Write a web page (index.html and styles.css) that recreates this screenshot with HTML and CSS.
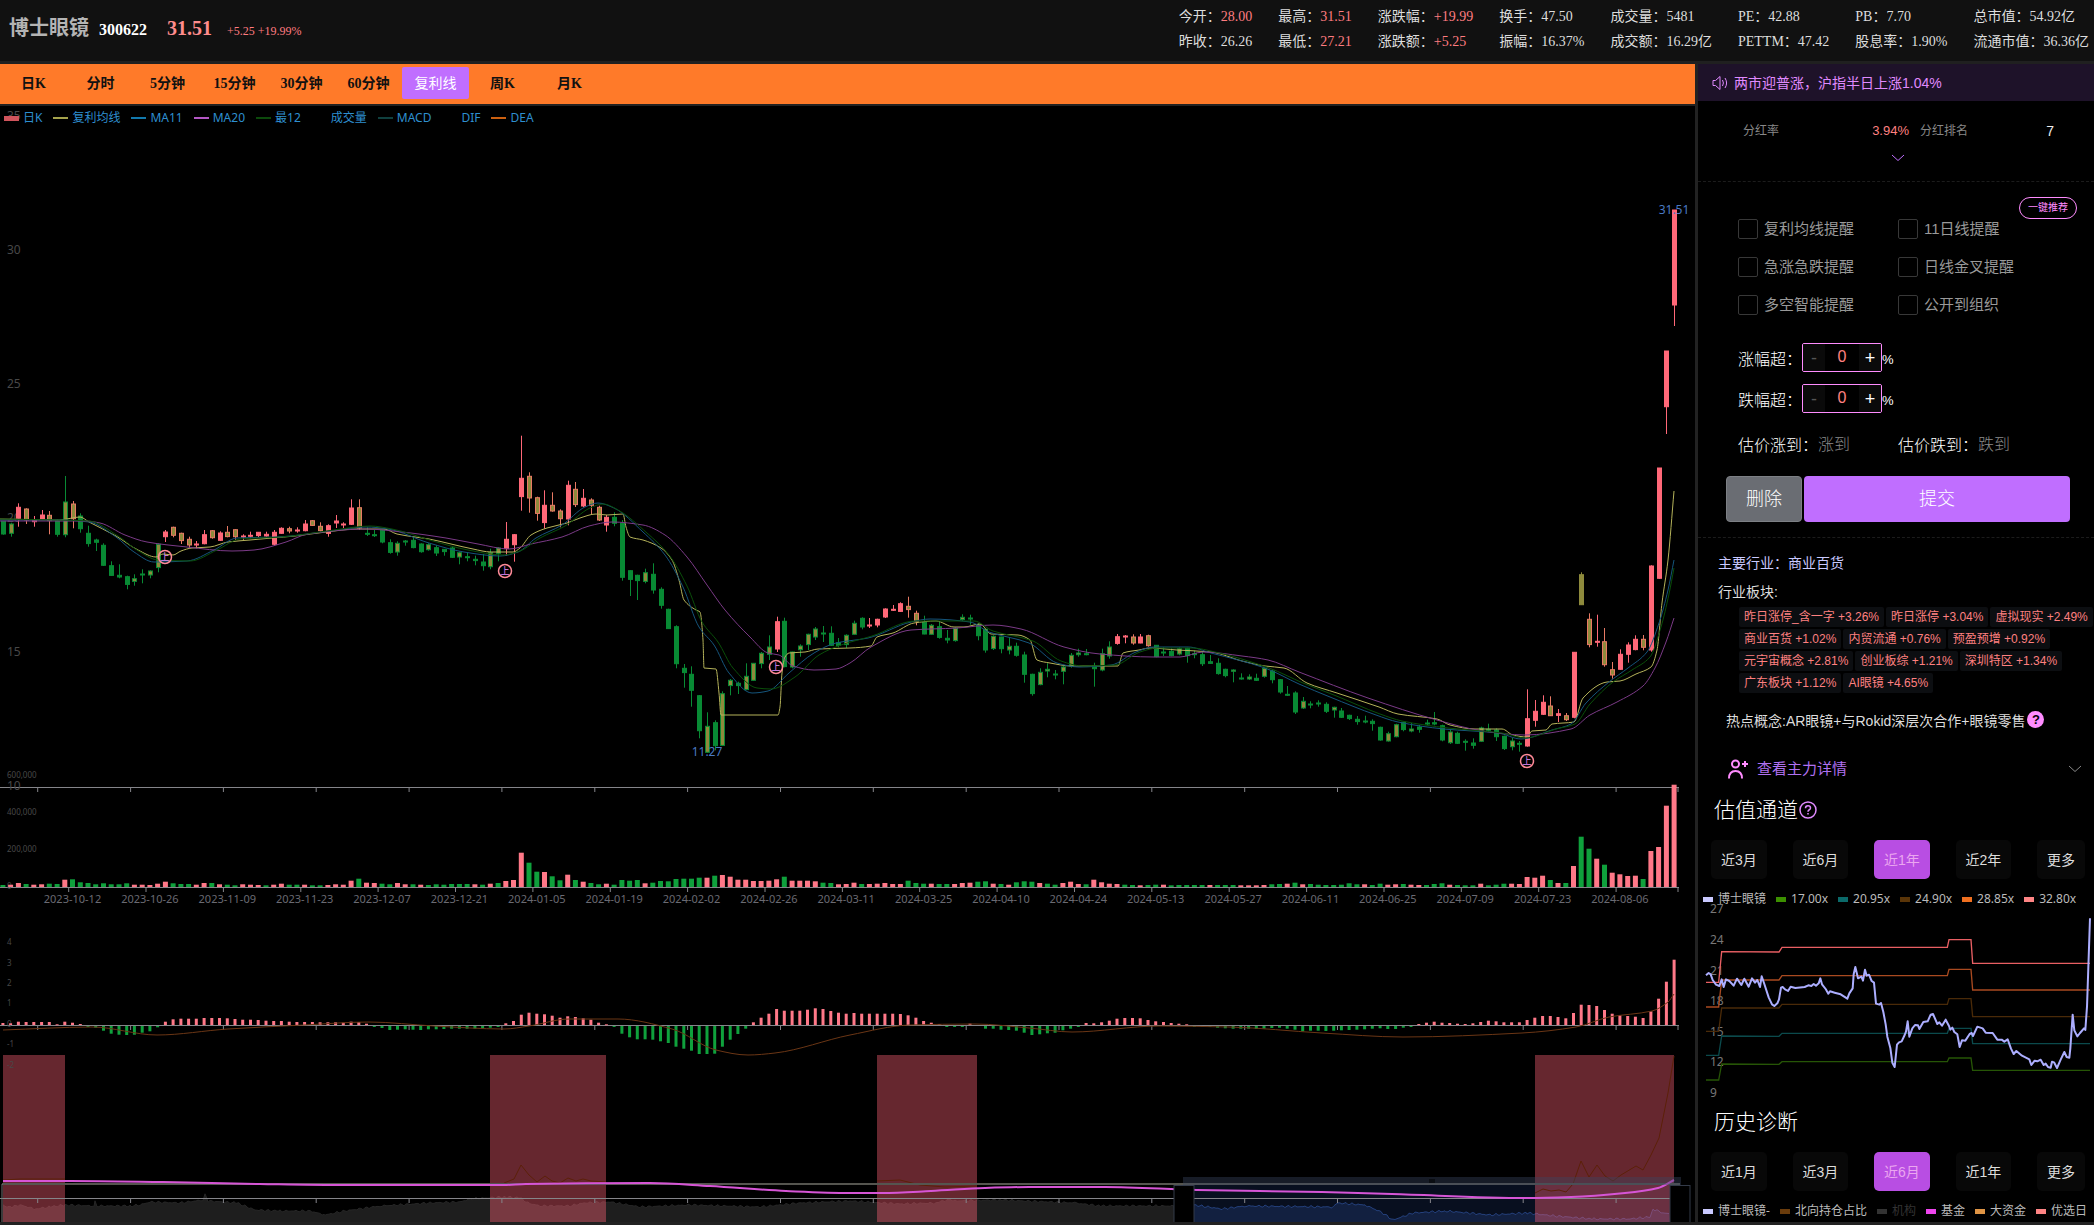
FILE: index.html
```html
<!DOCTYPE html>
<html lang="zh-CN">
<head>
<meta charset="utf-8">
<title>博士眼镜 300622</title>
<meta name="viewport" content="width=device-width, initial-scale=1">
<link rel="stylesheet" href="styles.css">
</head>
<body>
<header class="topbar">
  <div class="stock">
    <h1 class="stock-name">博士眼镜</h1>
    <span class="stock-code">300622</span>
    <span class="stock-price">31.51</span>
    <span class="stock-change">+5.25 +19.99%</span>
  </div>
  <div class="quotes">
    <span>今开：<b class="up">28.00</b></span><span>最高：<b class="up">31.51</b></span><span>涨跌幅：<b class="up">+19.99</b></span><span>换手：47.50</span><span>成交量：5481</span><span>PE：42.88</span><span>PB：7.70</span><span>总市值：54.92亿</span>
    <span>昨收：26.26</span><span>最低：<b class="up">27.21</b></span><span>涨跌额：<b class="up">+5.25</b></span><span>振幅：16.37%</span><span>成交额：16.29亿</span><span>PETTM：47.42</span><span>股息率：1.90%</span><span>流通市值：36.36亿</span>
  </div>
</header>
<main class="layout">
  <section class="board">
    <nav class="tabs">
      <button class="tab">日K</button><button class="tab">分时</button><button class="tab">5分钟</button><button class="tab">15分钟</button><button class="tab">30分钟</button><button class="tab">60分钟</button><button class="tab tab-active">复利线</button><button class="tab">周K</button><button class="tab">月K</button>
    </nav>
    <div class="chart">
      <svg id="kline" class="kline" role="img" aria-label="K线图"></svg>
      <ul class="series">
        <li><i class="swatch sw-k"></i>日K</li>
        <li><i class="swatch sw-yellow"></i>复利均线</li>
        <li><i class="swatch sw-blue"></i>MA11</li>
        <li><i class="swatch sw-violet"></i>MA20</li>
        <li><i class="swatch sw-green"></i>最12</li>
        <li><i class="swatch"></i>成交量</li>
        <li><i class="swatch sw-teal"></i>MACD</li>
        <li><i class="swatch"></i>DIF</li>
        <li><i class="swatch sw-orange"></i>DEA</li>
      </ul>
    </div>
  </section>
  <aside class="side">
    <div class="news">
      <svg width="16" height="16" viewBox="0 0 16 16" fill="none" stroke="currentColor"><path d="M1 5.500h2.500L8 1.500v13l-4.500-4H1z"/><path d="M10.500 5q1.800 3 0 6M13 3q3.200 5 0 10"/></svg>
      <a href="#news">两市迎普涨，沪指半日上涨1.04%</a>
    </div>
    <section class="dividend">
      <div class="dividend-row">
        <span>分红率</span><span class="rate">3.94%</span><span>分红排名</span><span class="rank">7</span>
      </div>
      <button class="expand" aria-label="展开"><svg width="14" height="8" viewBox="0 0 14 8" fill="none" stroke="currentColor"><path d="M1 1l6 5.500L13 1"/></svg></button>
    </section>
    <form class="alerts">
      <button type="button" class="recommend">一键推荐</button>
      <div class="checks">
        <label><input type="checkbox">复利均线提醒</label><label><input type="checkbox">11日线提醒</label>
        <label><input type="checkbox">急涨急跌提醒</label><label><input type="checkbox">日线金叉提醒</label>
        <label><input type="checkbox">多空智能提醒</label><label><input type="checkbox">公开到组织</label>
      </div>
      <div class="limits">
        <div class="limit"><label for="rise">涨幅超：</label><span class="stepper"><button type="button" class="minus">-</button><input id="rise" type="text" value="0"><button type="button">+</button></span><span class="unit">%</span></div>
        <div class="limit"><label for="fall">跌幅超：</label><span class="stepper"><button type="button" class="minus">-</button><input id="fall" type="text" value="0"><button type="button">+</button></span><span class="unit">%</span></div>
      </div>
      <div class="targets">
        <label for="up-to">估价涨到：</label><input id="up-to" type="text" placeholder="涨到">
        <label for="down-to">估价跌到：</label><input id="down-to" type="text" placeholder="跌到">
      </div>
      <div class="actions"><button type="button" class="delete">删除</button><button type="button" class="submit">提交</button></div>
    </form>
    <section class="industry">
      <p class="main-industry">主要行业：<a href="#industry">商业百货</a></p>
      <p>行业板块:</p>
      <div class="tags">
        <span>昨日涨停_含一字 +3.26%</span><span>昨日涨停 +3.04%</span><span>虚拟现实 +2.49%</span><span>商业百货 +1.02%</span><span>内贸流通 +0.76%</span><span>预盈预增 +0.92%</span><span>元宇宙概念 +2.81%</span><span>创业板综 +1.21%</span><span>深圳特区 +1.34%</span><span>广东板块 +1.12%</span><span>AI眼镜 +4.65%</span>
      </div>
      <p class="hot">热点概念:AR眼镜+与Rokid深层次合作+眼镜零售<button class="help" aria-label="说明">?</button></p>
    </section>
    <a class="detail" href="#detail">
      <svg width="22" height="20" viewBox="0 0 22 20" fill="none" stroke="#ff8cff" stroke-width="2"><circle cx="8.500" cy="5" r="3.500"/><path d="M2 19.500c0-5 2.500-7.500 6.500-7.500s6.500 2.500 6.500 7.500M15 5h6M18 2v6"/></svg>
      <span>查看主力详情</span>
      <svg class="detail-arrow" width="14" height="8" viewBox="0 0 14 8" fill="none" stroke="#888"><path d="M1 1l6 5.500L13 1"/></svg>
    </a>
    <section>
      <h2 class="heading">估值通道<svg width="18" height="18" viewBox="0 0 18 18" fill="none" stroke="#e08aff" stroke-width="1.500"><circle cx="9" cy="9" r="8"/><path d="M6.500 7.200q0-2.400 2.500-2.400t2.500 2.200q0 1.300-1.500 2-1 .500-1 1.700M9 12v1.500"/></svg></h2>
      <div class="ranges"><button>近3月</button><button>近6月</button><button class="on">近1年</button><button>近2年</button><button>更多</button></div>
      <ul class="keys">
        <li><i class="key k-price"></i>博士眼镜</li><li><i class="key k-green"></i>17.00x</li><li><i class="key k-teal"></i>20.95x</li><li><i class="key k-brown"></i>24.90x</li><li><i class="key k-orange"></i>28.85x</li><li><i class="key k-pink"></i>32.80x</li>
      </ul>
      <svg class="valuation" viewBox="24 63 1188 618" role="img" aria-label="估值通道">
        <g class="val-axis"><text x="60" y="98">27</text><text x="60" y="191">24</text><text x="60" y="284">21</text><text x="60" y="375">18</text><text x="60" y="467">15</text><text x="60" y="558">12</text><text x="60" y="650">9</text></g>
        <g fill="none" stroke-width="4">
          <polyline stroke="#e85f63" points="48,307 86,307 95,215 267,216 276,202 772,202 777,179 843,179 848,250 1200,250"/>
          <polyline stroke="#a94a20" points="48,381 86,381 95,300 267,300 276,287 772,287 777,268 843,268 848,330 1200,330"/>
          <polyline stroke="#4a2a08" points="48,454 86,454 95,384 267,384 276,373 772,373 777,356 843,356 848,410 1200,410"/>
          <polyline stroke="#0b4a4c" points="48,526 86,526 95,468 267,469 276,460 772,460 777,445 843,445 848,491 1200,491"/>
          <polyline stroke="#265506" points="48,600 86,600 95,552 267,553 276,545 772,545 777,534 843,534 848,571 1200,571"/>
          <polyline stroke="#acaeff" stroke-width="6" stroke-linejoin="round" points="48,286 56,279 62,283 68,300 78,314 88,318 95,298 101,321 108,298 118,303 131,317 141,296 154,315 163,296 176,320 186,295 195,308 202,300 210,321 215,289 222,309 236,352 246,373 253,378 262,370 267,358 273,323 278,321 285,328 294,333 302,320 316,324 344,321 355,316 364,318 371,312 378,317 386,310 391,295 396,313 407,327 415,341 420,334 434,338 452,343 472,356 478,340 488,325 491,283 496,261 504,295 514,290 519,302 525,269 530,287 537,284 545,303 552,308 558,371 568,374 573,369 580,396 587,433 592,470 601,504 607,548 614,561 621,494 627,487 635,484 644,465 648,455 653,424 658,470 667,445 675,435 684,436 688,447 700,426 713,424 722,404 729,402 742,432 748,427 756,437 767,419 777,438 781,449 787,443 793,456 802,463 809,501 816,481 826,482 839,462 845,459 849,468 862,440 878,445 887,458 908,459 922,479 935,479 943,485 953,478 963,506 971,522 979,513 996,527 1018,538 1024,555 1034,542 1042,544 1052,539 1061,555 1067,551 1074,561 1082,563 1086,545 1092,547 1101,564 1112,539 1123,516 1130,531 1138,533 1141,505 1148,404 1153,451 1162,469 1170,459 1182,445 1186,450 1191,380 1200,115"/>
        </g>
      </svg>
    </section>
    <section>
      <h2 class="heading">历史诊断</h2>
      <div class="ranges"><button>近1月</button><button>近3月</button><button class="on">近6月</button><button>近1年</button><button>更多</button></div>
      <ul class="keys">
        <li><i class="key k-price"></i>博士眼镜-</li><li><i class="key k-north"></i>北向持仓占比</li><li class="muted"><i class="key k-muted"></i>机构</li><li><i class="key k-fund"></i>基金</li><li><i class="key k-big"></i>大资金</li><li><i class="key k-pink"></i>优选日</li>
      </ul>
    </section>
  </aside>
</main>
<script src="chart.js"></script>
</body>
</html>
```

FILE: styles.css
```css
* { box-sizing: border-box; }
body {
  margin: 0;
  background: #000;
  color: #ddd;
  font: 14px/20px "Liberation Sans", "Noto Sans CJK SC", sans-serif;
}
h1, h2, p, ul { margin: 0; padding: 0; font-weight: 400; }
ul { list-style: none; }
a { color: inherit; text-decoration: none; }
button, input { font: inherit; color: inherit; border: 0; padding: 0; margin: 0; background: none; }
button { cursor: pointer; }

.topbar {
  display: flex;
  justify-content: space-between;
  height: 64px;
  padding: 5px 5px 0 9px;
  background: #111;
  border-bottom: 3px solid #202020;
  font-family: "Liberation Serif", "Noto Sans CJK SC", serif;
}
.stock { display: flex; align-items: baseline; padding-top: 8px; line-height: 30px; }
.stock-name { font-size: 20px; font-weight: 700; color: #b4b4b4; }
.stock-code { margin-left: 10px; font-size: 16px; font-weight: 700; color: #fff; }
.stock-price { margin-left: 20px; font-size: 20px; font-weight: 700; color: #ff8c8c; }
.stock-change { margin-left: 15px; font-size: 12px; color: #ff7c80; }
.quotes {
  display: grid;
  grid-template-columns: repeat(8, auto);
  column-gap: 26px;
  grid-auto-rows: 25px;
  line-height: 24px;
  white-space: nowrap;
}
.quotes b { font-weight: 400; }
.quotes .up { color: #ff7c80; }

.layout { display: grid; grid-template-columns: minmax(0, 1fr) 396px; border-bottom: 3px solid #222; }
.board { border-right: 3px solid #222; }
.tabs {
  display: flex;
  padding-top: 3px;
  height: 42px;
  background: #ff7a29;
  border-bottom: 2px solid #222;
  font-family: "Liberation Serif", "Noto Sans CJK SC", serif;
}
.tab { width: 67px; height: 32px; padding-top: 2px; color: #111; font-weight: 700; }
.tab-active { background: #c06eff; color: #fff; font-weight: 400; border-radius: 2px; }

.chart { position: relative; }
.kline { display: block; width: 100%; height: 1116px; font-family: "Noto Sans", sans-serif; }
.series {
  position: absolute;
  top: 2px;
  left: 4px;
  display: flex;
  gap: 11px;
  color: #2e8fd0;
  font: 12px/20px "Noto Sans", "Noto Sans CJK SC", sans-serif;
}
.series li { display: flex; align-items: center; gap: 4px; }
.swatch { width: 15px; height: 2px; }
.sw-k { height: 5px; background: #d0545c; }
.sw-yellow { background: #a5a34c; }
.sw-blue { background: #1279ad; }
.sw-violet { background: #b357c4; }
.sw-green { background: #0c4a0c; }
.sw-teal { background: #10403f; }
.sw-orange { background: #cc6010; }
.label { fill: #484848; font-size: 12px; }
.label-date { fill: #6a6a72; font-size: 11px; text-anchor: middle; }
.label-small { fill: #484848; font-size: 8px; }
.label-extreme { fill: #4a7ac4; font-size: 12px; text-anchor: middle; font-family: "Noto Sans", sans-serif; }
.mark { fill: #e58cff; font-size: 9px; text-anchor: middle; font-family: "Noto Sans CJK SC", sans-serif; }

.side { overflow: hidden; min-width: 0; }
.news { display: flex; align-items: center; gap: 6px; height: 37px; padding: 1px 0 0 14px; background: #1e1229; color: #e08aff; }
.dividend { padding: 21px 24px 0 45px; height: 81px; border-bottom: 1px dashed #1c1c1c; }
.dividend-row { display: flex; font-size: 12px; line-height: 18px; color: #888; }
.rate { width: 130px; margin-right: 11px; text-align: right; font-size: 13px; color: #ff8080; }
.rank { margin-left: auto; margin-right: 16px; font-size: 14px; color: #eee; }
.expand { display: block; width: 14px; height: 8px; margin: 14px 0 0 148px; color: #c06eff; }
.expand svg { display: block; }

.alerts { padding: 15px 24px 15px 28px; border-bottom: 1px dashed #1c1c1c; }
.recommend {
  display: block;
  width: 58px;
  height: 22px;
  margin: 0 -7px 0 auto;
  border: 1px solid #ff8cff;
  border-radius: 11px;
  color: #ff8cff;
  font-size: 10px;
  line-height: 18px;
}
.checks { display: grid; grid-template-columns: 160px 160px; row-gap: 18px; padding-left: 12px; color: #999; font-size: 15px; }
.checks label { display: flex; align-items: center; gap: 6px; height: 20px; line-height: 22px; }
.checks input { appearance: none; width: 20px; height: 20px; border: 1px solid #383838; border-radius: 2px; }
.limits { display: grid; row-gap: 12px; margin-top: 28px; padding-left: 12px; font-size: 16px; font-weight: 300; color: #fff; }
.limit { display: flex; align-items: center; height: 29px; }
.limit label { width: 64px; padding-top: 4px; }
.stepper { display: flex; width: 80px; height: 29px; border: 1px solid #ff8cff; border-radius: 2px; overflow: hidden; }
.stepper button { width: 22px; background: #0a0a0a; color: #fff; font-size: 18px; }
.stepper .minus { color: #555; }
.stepper input { flex: 1; min-width: 0; padding-bottom: 2px; text-align: center; color: #ff8080; }
.unit { padding-top: 4px; font-size: 13px; }
.targets { display: grid; grid-template-columns: 80px 80px 80px 80px; align-items: center; height: 22px; margin-top: 21px; padding-left: 12px; font-size: 16px; font-weight: 300; color: #fff; white-space: nowrap; }
.targets label { padding-top: 2px; }
.targets input { width: 100%; height: 22px; }
.targets input::placeholder { color: #8a8a8a; opacity: 1; }
.actions { display: flex; gap: 2px; height: 46px; margin-top: 20px; font-size: 18px; font-weight: 300; }
.actions button { border-radius: 4px; color: #fff; }
.actions .delete { width: 76px; background: #6a6d73; border: 1px solid #7d8085; }
.actions .submit { flex: 1; background: #c06eff; }

.industry { padding: 15px 0 0 20px; }
.industry p + p { margin-top: 9px; }
.main-industry { color: #c9c9ff; }
.tags { display: flex; flex-wrap: wrap; gap: 2px; margin: 5px 0 18px; padding-left: 21px; }
.tags span { padding: 0 5px; border-radius: 2px; background: #0c0e11; color: #ff8080; font-size: 12px; white-space: nowrap; }
.hot { display: flex; gap: 2px; padding-left: 8px; white-space: nowrap; }
.help { width: 17px; height: 17px; border-radius: 50%; background: #ff8cff; color: #000; font-size: 13px; font-weight: 700; line-height: 17px; }
.detail { display: flex; align-items: center; gap: 8px; height: 20px; margin: 28px 12px 16px 29px; color: #b070f0; font-size: 15px; }
.detail-arrow { margin-left: auto; }
.heading { display: flex; align-items: center; gap: 1px; padding-left: 16px; font-size: 21px; font-weight: 300; line-height: 30px; color: #fff; }
.ranges { display: flex; justify-content: space-between; margin: 15px 9px 10px 13px; }
.ranges button { height: 39px; padding: 0 10px; border-radius: 5px; background: #080808; }
.ranges .on { background: #b84ee3; color: #eba6f0; }
.keys { display: flex; gap: 10px; padding-left: 5px; font: 12px/20px "Noto Sans", "Noto Sans CJK SC", sans-serif; color: #bbb; white-space: nowrap; }
.keys li { display: flex; align-items: center; gap: 5px; }
.key { width: 10px; height: 5px; }
.k-price { background: #c9c9ff; }
.k-green { background: #3c9000; }
.k-teal { background: #0b6a6a; }
.k-brown { background: #5a3508; }
.k-orange { background: #f07020; }
.k-pink { background: #ff8585; }
.k-north { background: #6a3c0c; }
.k-fund { background: #ee45ee; }
.k-big { background: #e09545; }
.k-muted { background: #333; }
.muted { color: #333; }
.valuation { display: block; width: 100%; margin-top: -8px; }
.val-axis { fill: #777; font: 36px "Noto Sans", sans-serif; }
```

FILE: chart.js
```js
// Candle rows: kind, high, body top, body bottom, low.
// R rising, G falling, r/g hollow variants, y neutral. Levels are thirds of a pixel below each block's base.
var BLOCKS = [
  { base: 440, rows: 'G244,244,282,284 g248,252,280,290 R190,202,235,260 r205,207,240,252 R228,240,245,260 R210,225,238,240 r213,226,242,283 G238,243,283,290 g108,186,284,292 r183,192,236,265 G220,228,266,278 G257,280,311,320 G296,300,307,333 G310,316,376,378 G364,377,406,408 G373,406,411,415 G407,410,433,448 g403,416,424,437 G388,402,405,430 g391,393,405,415 g310,313,383,397 R270,276,290,306 r260,262,286,292 r278,280,302,312 r290,298,315,325 R303,312,315,325 R270,284,311,313 r270,272,293,296 R274,279,301,303 r258,277,290,292 r268,269,290,300 R283,288,290,300 R275,286,288,295 R277,277,287,292 R275,283,288,290 R270,277,313,317 R262,265,280,281 r260,266,273,280 R262,270,272,278 R240,252,272,274 r240,242,256,258 r247,259,272,275 R253,257,280,290 R225,243,249,264 R247,252,254,264 R178,204,253,255 r178,203,264,270 G262,280,281,288 G270,284,287,291 G270,271,306,310 G298,308,337,341 g304,310,336,347 G300,303,305,317 G290,301,323,325 G310,312,335,338 g310,314,329,332 G316,323,339,348 G328,328,335,347 G318,324,352,354 g335,338,351,373 G338,350,353,364 G347,358,362,376 G342,366,377,392 g326,338,380,388 g322,324,340,364 R246,298,326,347 R282,284,314,365 R-13,115,170,212 r97,109,174,218 r170,173,220,242 R151,196,248,266 r157,196,213,215 r208,213,236,262 R122,136,237,256 r126,148,194,201 R147,175,198,202 r175,180,196,225 r197,202,240,243 R225,232,255,275 G217,232,250,259 G240,250,412,422 G391,392,418,468 G404,406,422,480 g386,398,424,430 G370,403,450,461 G442,448,496,506 G506,508,566,567 G556,560,671,685 G672,685,698,743 G679,703,751,800 G765,767,872,895' },
  { base: 560, rows: 'g457,499,577,578 G481,488,557,571 g394,401,556,558 g357,361,377,406 G365,370,377,402 g310,349,389,391 g309,310,361,362 g276,280,311,325 g226,261,283,300 R170,185,267,276 G173,184,320,322 g275,276,321,325 g253,258,269,290 g221,223,254,270 g201,207,231,240 G198,219,221,246 G199,220,256,258 G234,248,256,262 g223,226,254,264 g182,190,223,224 G172,175,201,208 R174,195,197,204 R176,178,195,202 R145,147,171,174 R135,148,151,153 R127,131,154,156 r110,139,149,173 r152,160,184,196 G167,187,222,223 g192,196,223,224 G184,200,232,236 G210,235,240,250 g202,205,242,245 g163,172,179,183 G164,174,177,194 G190,195,227,241 G206,208,270,278 g226,229,266,270 G230,231,266,280 g233,259,270,283 G248,259,286,290 G275,285,343,368 G341,343,401,407 g325,337,374,376 g310,328,333,352 G330,342,345,358 g318,321,334,373 g279,286,318,323 g266,279,284,290 G267,281,283,286 G308,318,326,380 g266,281,330,334 g244,261,288,296 R222,230,250,254 R225,228,231,250 r223,231,249,254 R222,231,249,250 r224,227,257,260 G256,256,290,292 G262,276,279,288 G265,274,287,289 g262,266,282,286 G263,265,287,308 G272,281,284,295 G273,284,311,318 G285,305,310,311 G295,310,341,344 G326,328,347,352 g328,330,334,367 G340,354,356,359 g343,351,357,360 G341,355,361,363 g323,325,349,353 G330,333,359,370 G357,359,396,401 G378,403,406,408 G394,399,456,462 g411,424,444,447 G424,432,435,445 G421,429,431,440 G427,433,454,459 g440,442,450,473 G444,453,472,474 G464,466,476,480 G468,478,485,494 G467,483,486,490 G478,484,491,512 G500,502,540,542 g515,521,543,545 g491,494,530,532 G485,487,509,514 g489,507,513,517 G495,501,508,518 G479,489,491,496 G456,488,492,496 G494,497,540,544 g510,516,548,552 G515,520,550,552 G538,544,546,572 G535,549,556,566 g500,504,544,546 G491,508,510,514 G505,510,530,543 G527,529,566,570 g533,543,560,571 G543,550,553,575 R388,476,558,560 R420,454,481,500 R406,427,463,465 r409,438,467,468 R447,461,466,486 r459,467,479,483 R276,277,472,475 y37,44,134,134 r160,178,254,262 R164,244,247,260 r204,245,314,320 r306,329,345,356 R268,283,328,329 R247,255,283,308 R226,238,269,271 r225,238,262,271 R16,18,270,275 R-276,-276,55,56 R-627,-627,-460,-378 R-1050,-1050,-765,-702' }
];
var VOLUME = 'g6 r7 r12 g9 r7 r8 g10 g9 r22 g23 g14 g12 g8 g11 g8 g8 g11 r7 r7 r6 r10 r16 g11 g9 g9 r7 r12 g12 r8 g7 g5 r8 r7 r6 g5 r7 r10 g7 g7 r7 g5 g5 r6 r8 r7 r19 g25 r13 r12 g10 g8 r12 r8 g8 r7 g6 g8 g7 g9 g9 g9 r8 g7 r10 g12 r18 r21 r103 g73 g46 r45 g32 g20 r37 g21 r16 g12 g8 r10 g7 g21 g19 g21 r11 g13 g18 g17 g24 g25 g25 g28 r28 g34 r36 r31 r22 r22 r18 r18 r19 r23 g31 r19 r19 r19 r17 g13 g12 r8 r9 r13 g9 r9 r10 r12 r9 r9 g19 g12 g10 r10 g9 g9 r9 r12 r13 g16 g17 r10 g9 r7 g14 g17 g16 r12 g10 g7 r12 r16 r9 g8 r22 r14 r10 r9 g7 g6 r5 g6 g7 r7 g5 g6 g6 g6 g6 r6 g6 g6 g6 r5 r5 r5 r6 g8 g9 r10 g13 r8 g9 g7 g6 g6 g7 g11 g8 r8 g6 g10 r7 r8 g9 r7 r6 g6 g9 g11 r7 g6 g5 g5 r10 g5 g7 g10 r10 r9 r30 r28 r34 g21 r12 g12 r63 g151 g115 r85 g67 r43 r38 r33 r34 g24 r108 r120 r244 r307'.split(' ');
var MACD = [6,5,10,9,9,9,9,2,10,7,3,-2,-5,-14,-23,-26,-27,-26,-20,-16,-4,10,17,19,19,19,21,21,21,20,18,16,16,15,13,12,12,10,9,9,9,8,8,8,7,10,9,4,-2,-6,-12,-11,-10,-11,-12,-10,-10,-9,-8,-8,-8,-8,-7,-5,-2,5,12,31,37,34,32,28,22,26,24,20,16,7,2,-3,-23,-34,-40,-40,-41,-46,-51,-62,-68,-74,-84,-84,-83,-62,-41,-24,-8,8,22,34,48,43,43,43,46,50,48,42,37,34,36,34,34,34,34,34,33,29,22,12,7,3,-1,-3,-2,4,0,-8,-8,-11,-12,-14,-20,-27,-25,-22,-20,-13,-8,-1,6,5,8,13,19,21,21,20,15,11,9,6,4,2,-1,-2,-3,-5,-7,-8,-8,-8,-9,-8,-6,-5,-8,-11,-16,-14,-14,-15,-14,-13,-12,-11,-10,-8,-7,-9,-9,-5,-2,3,7,10,7,6,4,3,5,9,13,11,8,8,8,15,22,27,27,24,20,36,61,60,57,45,34,29,27,25,21,41,79,130,196];

var COMPOUND = '0,519 60,520 72,518 80,517 89,522 116,536 138,550 156,557 163,554 173,555 181,551 192,548 210,547 228,542 250,540 272,538 295,536 326,532 357,529 384,529 397,534 415,537 429,539 451,544 473,549 491,552 513,552 520,548 531,535 547,528 567,523 580,518 596,514 607,515 623,514 626,527 630,537 643,540 661,548 672,560 679,580 684,600 696,610 700,612 703,640 704,668 716,669 719,693 721,715 778,715 780,707 782,673 785,657 789,653 805,652 818,649 850,648 871,646 877,637 893,633 914,623 936,621 954,627 964,627 980,624 991,634 1018,635 1030,640 1037,660 1050,663 1071,666 1118,666 1123,653 1139,650 1150,648 1177,650 1211,652 1242,661 1265,666 1284,668 1307,683 1337,693 1379,707 1398,714 1437,719 1450,725 1475,729 1502,729 1513,735 1527,737 1532,731 1546,730 1552,724 1574,722 1583,698 1607,682 1620,681 1636,674 1651,667 1657,650 1662,603 1668,560 1674,491';
var MA11 = '0,520 60,520 89,522 116,537 134,552 154,562 187,561 214,550 237,538 277,537 330,531 366,527 388,529 429,543 464,552 500,556 518,552 536,538 562,525 585,507 598,503 614,508 643,532 665,555 683,587 699,627 714,645 729,673 752,693 768,691 789,673 814,653 836,643 868,638 911,622 930,619 970,622 989,632 1029,643 1057,663 1079,667 1111,665 1136,652 1154,647 1188,647 1211,653 1265,668 1299,684 1330,697 1376,715 1398,722 1444,729 1498,733 1521,739 1552,730 1571,724 1586,703 1609,682 1628,668 1647,652 1659,623 1668,590 1674,560';
var BEST12 = '0,519 60,520 89,521 118,536 137,550 158,560 190,561 217,550 240,539 281,537 334,530 370,526 392,529 433,541 468,550 503,555 520,551 540,538 565,526 590,508 603,504 618,510 647,533 669,555 687,586 702,622 718,642 733,668 757,688 771,689 795,677 819,655 841,645 872,636 915,621 935,621 974,621 993,631 1033,641 1061,661 1083,666 1115,665 1140,652 1158,648 1192,648 1215,652 1269,668 1303,683 1334,695 1380,714 1402,721 1448,728 1502,733 1525,738 1556,729 1575,724 1590,704 1613,682 1632,670 1650,657 1661,627 1669,594 1674,568';
var MA20 = '0,521 85,521 100,523 125,535 147,542 187,547 232,551 254,550 286,542 308,534 366,529 402,532 446,538 478,544 509,549 531,544 562,537 589,526 612,522 643,525 665,535 687,557 707,585 725,610 750,637 768,653 779,655 793,666 814,670 836,669 850,663 871,647 911,630 957,628 993,625 1021,629 1064,647 1100,654 1154,657 1180,657 1203,652 1242,656 1268,660 1299,672 1368,698 1437,720 1483,731 1525,735 1571,729 1590,715 1617,702 1643,686 1655,668 1666,642 1674,618';
var DEA = '3,1030 92,1027 157,1035 228,1029 304,1025 369,1022 434,1026 504,1029 529,1026 569,1019 618,1019 672,1029 716,1050 748,1055 775,1053 850,1035 910,1025 975,1024 1029,1028 1072,1032 1159,1026 1229,1027 1322,1033 1403,1037 1522,1033 1576,1027 1609,1017 1652,1011 1668,1002 1674,994';
var TREND = '3,1181 70,1181 163,1182 260,1184 336,1185 504,1185 526,1184 650,1183 710,1186 786,1191 850,1193 882,1193 931,1191 985,1188 1029,1187 1105,1187 1197,1190 1322,1192 1392,1194 1528,1198 1571,1197 1625,1193 1658,1188 1674,1180';
var HISTORY = '3,1206 12,1207 20,1205 35,1209 50,1207 65,1205 94,1206 95,1202 97,1206 130,1206 140,1205 150,1202 180,1203 203,1200 205,1194 208,1201 237,1203 255,1210 280,1211 310,1211 325,1215 345,1211 380,1206 430,1203 460,1202 470,1199 505,1197 520,1198 528,1203 540,1206 570,1206 584,1203 610,1202 640,1207 690,1205 760,1207 800,1203 850,1201 900,1204 935,1203 951,1199 953,1201 1000,1200 1075,1203 1100,1206 1184,1206';
var WINDOW = '1194,1205 1222,1209 1245,1206 1332,1207 1338,1203 1365,1205 1381,1212 1393,1220 1413,1213 1446,1211 1490,1215 1527,1213 1555,1216 1592,1219 1630,1219 1650,1217 1653,1209 1663,1213 1671,1214';
var SPIKES = [
  '3,1180 20,1179 40,1179 65,1179',
  '504,1183 514,1179 521,1165 529,1175 537,1182 545,1176 552,1181 560,1183 568,1178 576,1181 583,1179 591,1181 606,1182',
  '877,1181 900,1180 920,1185 945,1187 977,1186',
  '1535,1193 1543,1189 1551,1191 1559,1190 1566,1192 1573,1184 1581,1161 1589,1177 1597,1165 1605,1176 1613,1181 1621,1175 1636,1166 1643,1170 1651,1155 1659,1138 1668,1093 1674,1056'
];
var ZONES = [[3, 65], [490, 606], [877, 977], [1535, 1674]];
var DATES = ['2023-10-12','2023-10-26','2023-11-09','2023-11-23','2023-12-07','2023-12-21','2024-01-05','2024-01-19','2024-02-02','2024-02-26','2024-03-11','2024-03-25','2024-04-10','2024-04-24','2024-05-13','2024-05-27','2024-06-11','2024-06-25','2024-07-09','2024-07-23','2024-08-06'];

var TOP = 106, HEIGHT = 1116, BASE_WIDTH = 1695, COUNT = 217;
var RED = '#ff6878', GREEN = '#088a34', OLIVE = '#8e8a3c';

function points(text) {
  return text.split(' ').map(function (p) { return p.split(',').map(Number); });
}

function draw() {
  var svg = document.getElementById('kline');
  var width = svg.clientWidth, k = width / BASE_WIDTH, out = [];
  svg.setAttribute('viewBox', '0 ' + TOP + ' ' + width + ' ' + HEIGHT);
  function X(i) { return (2.9 + 7.737 * i) * k; }
  function rect(x, y, w, h, fill, extra) {
    out.push('<rect x="' + x.toFixed(1) + '" y="' + y.toFixed(1) + '" width="' + w.toFixed(1) + '" height="' + Math.max(h, 1).toFixed(1) + '" fill="' + fill + '" ' + (extra || '') + '/>');
  }
  function line(x1, y1, x2, y2, stroke, w) {
    out.push('<path d="M' + x1.toFixed(1) + ' ' + y1.toFixed(1) + 'L' + x2.toFixed(1) + ' ' + y2.toFixed(1) + '" stroke="' + stroke + '" stroke-width="' + (w || 1) + '"/>');
  }
  function text(x, y, cls, value) {
    out.push('<text x="' + x.toFixed(1) + '" y="' + y + '" class="' + cls + '">' + value + '</text>');
  }
  // Curve through the points with horizontal-distance control handles limited by the neighbours' slope.
  function curve(data, stroke, w) {
    var p = points(data), d = 'M' + p[0][0] * k + ' ' + p[0][1], i;
    function slope(n) {
      if (n === 0 || n === p.length - 1) return null;
      var a = (p[n][1] - p[n - 1][1]) / (p[n][0] - p[n - 1][0]);
      var b = (p[n + 1][1] - p[n][1]) / (p[n + 1][0] - p[n][0]);
      return a * b <= 0 ? 0 : 2 * a * b / (a + b);
    }
    for (i = 1; i < p.length; i++) {
      var a = p[i - 1], b = p[i], h = (b[0] - a[0]) / 3, s = (b[1] - a[1]) / (b[0] - a[0]);
      var m = slope(i - 1), n = slope(i);
      if (m === null) m = s;
      if (n === null) n = s;
      d += 'C' + [(a[0] + h) * k, a[1] + m * h, (b[0] - h) * k, b[1] - n * h, b[0] * k, b[1]].map(function (v) { return v.toFixed(1); }).join(' ');
    }
    out.push('<path d="' + d + '" fill="none" stroke="' + stroke + '" stroke-width="' + (w || 1) + '"/>');
  }
  function rough(data) {
    var p = points(data), list = [], i, x;
    for (i = 1; i < p.length; i++) {
      for (x = p[i - 1][0]; x < p[i][0]; x += 2) {
        var t = (x - p[i - 1][0]) / (p[i][0] - p[i - 1][0]);
        list.push((x * k).toFixed(1) + ',' + (p[i - 1][1] + t * (p[i][1] - p[i - 1][1]) + Math.sin(x * 1.7) * Math.sin(x * 0.61) * 1.3).toFixed(1));
      }
    }
    return list;
  }
  function area(data, fill, stroke) {
    var l = rough(data), p = points(data), bottom = TOP + HEIGHT;
    out.push('<polygon fill="' + fill + '" points="' + l.join(' ') + ' ' + p[p.length - 1][0] * k + ',' + bottom + ' ' + p[0][0] * k + ',' + bottom + '"/>');
    out.push('<polyline fill="none" stroke="' + stroke + '" points="' + l.join(' ') + '"/>');
  }

  area(HISTORY, '#1e1e1e', '#262626');
  rect(1194 * k, 1185, 476 * k, 37, '#080f1f');
  area(WINDOW, '#122040', '#24407c');
  ZONES.forEach(function (z) { rect(z[0] * k, 1055, (z[1] - z[0]) * k, 167, '#ff6276', 'fill-opacity=".4"'); });
  SPIKES.forEach(function (s) { out.push('<polyline fill="none" stroke="#5c2008" points="' + points(s).map(function (p) { return p[0] * k + ',' + p[1]; }).join(' ') + '"/>'); });

  // Axes and ticks
  [787.5, 887.5, 1025.5, 1198.5].forEach(function (y) { line(0, y, 1679 * k, y, '#85858a'); });
  for (var t = 5; t < COUNT + 1; t += 12) {
    [787, 1025, 1198].forEach(function (y) { line(X(t - 0.5), y, X(t - 0.5), y + 5, '#85858a'); });
  }
  DATES.forEach(function (d, n) {
    var i = 9 + n * 10;
    line(X(i - 0.5), 887, X(i - 0.5), 892, '#85858a');
    text(X(i), 903, 'label-date', d);
  });
  [787, 887, 1025].forEach(function (y) { line(1678 * k, y, 1678 * k, y + 5, '#85858a'); });
  [[120, 35], [254, 30], [388, 25], [522, 20], [656, 15], [790, 10]].forEach(function (l) { text(7, l[0], 'label', l[1]); });
  [[778, '600,000'], [815, '400,000'], [852, '200,000'], [889, '0'], [945, '4'], [966, '3'], [986, '2'], [1006, '1'], [1027, '0'], [1047, '-1'], [1068, '-2']].forEach(function (l) { text(7, l[0], 'label-small', l[1]); });

  VOLUME.forEach(function (v, i) { var h = v.slice(1) / 3; rect(X(i) - 2.5, 887 - h, 5, h, v[0] === 'r' ? '#ff7888' : '#0fa13c'); });
  MACD.forEach(function (v, i) { if (v) rect(X(i) - 1.5, v > 0 ? 1025 - v / 3 : 1026, 3, Math.abs(v) / 3, v > 0 ? '#ff7888' : '#0fa13c'); });
  curve(DEA, '#6b3615');

  var n = 0;
  BLOCKS.forEach(function (block) {
    block.rows.split(' ').forEach(function (row) {
      var kind = row[0], v = row.slice(1).split(',').map(function (q) { return block.base + q / 3; });
      var edge = kind === 'y' ? OLIVE : /r/i.test(kind) ? (kind === 'r' ? '#e87a64' : RED) : GREEN;
      var x = Math.round(X(n++)) + 0.5;
      line(x, v[0], x, v[3], edge);
      rect(x - 2, v[1], 4, v[2] - v[1], /[rgy]/.test(kind) ? OLIVE : edge, 'stroke="' + edge + '"');
    });
  });
  curve(COMPOUND, '#b5b35a');
  curve(MA11, '#15557c');
  curve(MA20, '#7b3a87');
  curve(BEST12, '#0a4f0a');

  text(707 * k, 756, 'label-extreme', '11.27');
  text(1674 * k, 214, 'label-extreme', '31.51');
  [[165, 557], [505, 571], [776, 667], [1527, 761]].forEach(function (m) {
    out.push('<circle cx="' + m[0] * k + '" cy="' + m[1] + '" r="6.500" fill="none" stroke="#ff8a98" stroke-width="1.500"/>');
    text(m[0] * k, m[1] + 3, 'mark', '上');
  });

  // Zoom slider
  rect(2 * k, 1183, 1678 * k, 2, '#55554f');
  line(2, 1184, 2, 1222, '#777');
  curve(TREND, '#d655d6', 2);
  rect(1183 * k, 1177, 498 * k, 8, '#3a4662', 'fill-opacity=".4"');
  [1430, 1432, 1434].forEach(function (x) { line(x * k, 1179, x * k, 1183, '#000'); });
  [1174, 1670].forEach(function (x) { rect(x * k, 1185.5, 20, 37, '#000', 'stroke="#333a48"'); });
  svg.innerHTML = out.join('');
}
draw();
window.addEventListener('resize', draw);
```
